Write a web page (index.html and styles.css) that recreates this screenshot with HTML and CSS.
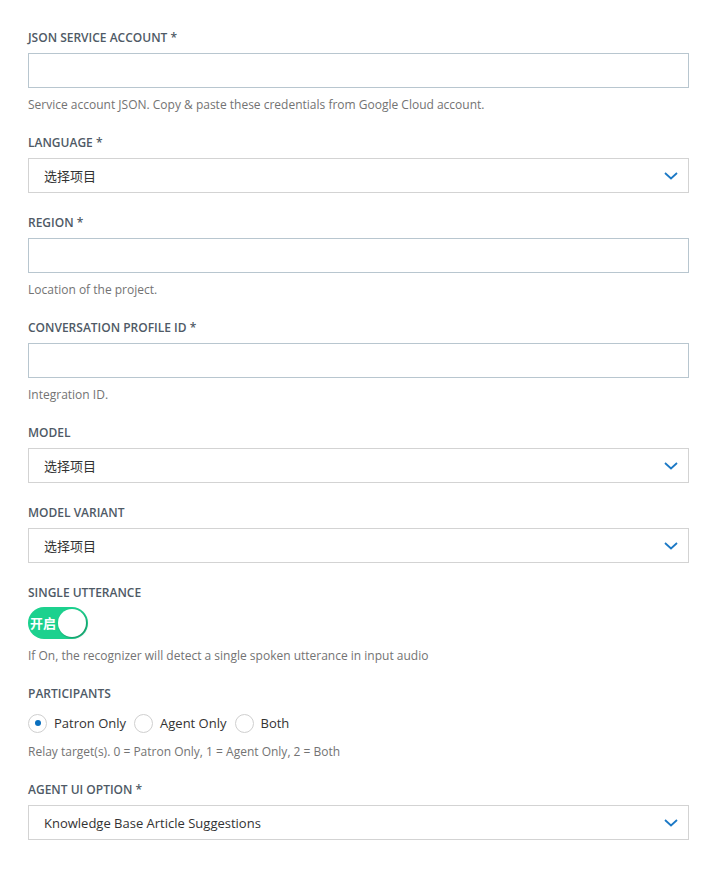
FILE: index.html
```html
<!DOCTYPE html>
<html lang="zh">
<head>
<meta charset="utf-8">
<title>Settings</title>
<link rel="stylesheet" href="styles.css">
</head>
<body>
<form class="form">
  <div class="field">
    <label class="label">JSON SERVICE ACCOUNT *</label>
    <input class="input" type="text">
    <div class="help">Service account JSON. Copy &amp; paste these credentials from Google Cloud account.</div>
  </div>

  <div class="field">
    <label class="label">LANGUAGE *</label>
    <div class="select"><span class="select-text">选择项目</span><svg class="chev" width="14" height="8" viewBox="0 0 14 8"><path d="M1 1 L7 6.5 L13 1" fill="none" stroke="#1b79c6" stroke-width="1.8"/></svg></div>
  </div>

  <div class="field">
    <label class="label">REGION *</label>
    <input class="input" type="text">
    <div class="help">Location of the project.</div>
  </div>

  <div class="field">
    <label class="label">CONVERSATION PROFILE ID *</label>
    <input class="input" type="text">
    <div class="help">Integration ID.</div>
  </div>

  <div class="field">
    <label class="label">MODEL</label>
    <div class="select"><span class="select-text">选择项目</span><svg class="chev" width="14" height="8" viewBox="0 0 14 8"><path d="M1 1 L7 6.5 L13 1" fill="none" stroke="#1b79c6" stroke-width="1.8"/></svg></div>
  </div>

  <div class="field">
    <label class="label">MODEL VARIANT</label>
    <div class="select"><span class="select-text">选择项目</span><svg class="chev" width="14" height="8" viewBox="0 0 14 8"><path d="M1 1 L7 6.5 L13 1" fill="none" stroke="#1b79c6" stroke-width="1.8"/></svg></div>
  </div>

  <div class="field">
    <label class="label label-toggle">SINGLE UTTERANCE</label>
    <div class="toggle"><span class="toggle-text">开启</span><span class="knob"></span></div>
    <div class="help help-toggle">If On, the recognizer will detect a single spoken utterance in input audio</div>
  </div>

  <div class="field">
    <label class="label">PARTICIPANTS</label>
    <div class="radios">
      <span class="radio checked"></span><span class="radio-text">Patron Only</span>
      <span class="radio"></span><span class="radio-text">Agent Only</span>
      <span class="radio"></span><span class="radio-text">Both</span>
    </div>
    <div class="help help-radio">Relay target(s). 0 = Patron Only, 1 = Agent Only, 2 = Both</div>
  </div>

  <div class="field">
    <label class="label">AGENT UI OPTION *</label>
    <div class="select"><span class="select-text">Knowledge Base Article Suggestions</span><svg class="chev" width="14" height="8" viewBox="0 0 14 8"><path d="M1 1 L7 6.5 L13 1" fill="none" stroke="#1b79c6" stroke-width="1.8"/></svg></div>
  </div>
</form>
</body>
</html>
```

FILE: styles.css
```css
html, body {
  margin: 0;
  padding: 0;
  background: #ffffff;
}

body {
  font-family: "Open Sans", "Noto Sans CJK SC", sans-serif;
  color: #333333;
}

.form {
  padding: 30px 22px 20px 28px;
  display: flex;
  flex-direction: column;
  gap: 22px;
}

.field {
  display: flex;
  flex-direction: column;
}

.label {
  font-size: 12px;
  line-height: 16px;
  font-weight: 600;
  color: #4f5a66;
  margin-bottom: 7px;
}

.label-toggle {
  margin-bottom: 6px;
}

.input {
  box-sizing: border-box;
  height: 35px;
  width: 100%;
  border: 1px solid #b8c6cf;
  border-radius: 0;
  margin: 0;
  padding: 0 15px;
  font: inherit;
  outline: none;
  background: #fff;
}

.select {
  box-sizing: border-box;
  height: 35px;
  border: 1px solid #d3d3d3;
  display: flex;
  align-items: center;
  justify-content: space-between;
  padding: 0 10px 0 15px;
}

.select-text {
  font-size: 13px;
  color: #333333;
  line-height: 18px;
}

.chev {
  display: block;
  margin-top: 1px;
}

.help {
  margin-top: 9px;
  font-size: 12px;
  line-height: 16px;
  color: #737373;
}

.help-toggle {
  margin-top: 9px;
}

.help-radio {
  margin-top: 10px;
}

.toggle {
  position: relative;
  width: 60px;
  height: 32px;
  border-radius: 16px;
  background: #1cd18e;
  display: flex;
  align-items: center;
}

.toggle-text {
  color: #ffffff;
  font-size: 13px;
  font-weight: 700;
  padding-left: 2px;
  line-height: 16px;
}

.knob {
  position: absolute;
  right: 2px;
  top: 2px;
  width: 28px;
  height: 28px;
  border-radius: 50%;
  background: #ffffff;
  box-shadow: 1px 1px 2px rgba(0, 0, 0, 0.3);
}

.radios {
  display: flex;
  align-items: center;
  height: 22px;
  margin-top: 3px;
}

.radio {
  box-sizing: border-box;
  width: 19px;
  height: 19px;
  border: 1px solid #cfcfcf;
  border-radius: 50%;
  position: relative;
  flex: none;
  background: #fff;
}

.radio.checked::after {
  content: "";
  position: absolute;
  left: 5.5px;
  top: 5.5px;
  width: 6px;
  height: 6px;
  border-radius: 50%;
  background: #0a6fbf;
}

.radio-text {
  font-size: 13px;
  color: #333333;
  margin-left: 7px;
  margin-right: 8px;
  line-height: 18px;
}
```
